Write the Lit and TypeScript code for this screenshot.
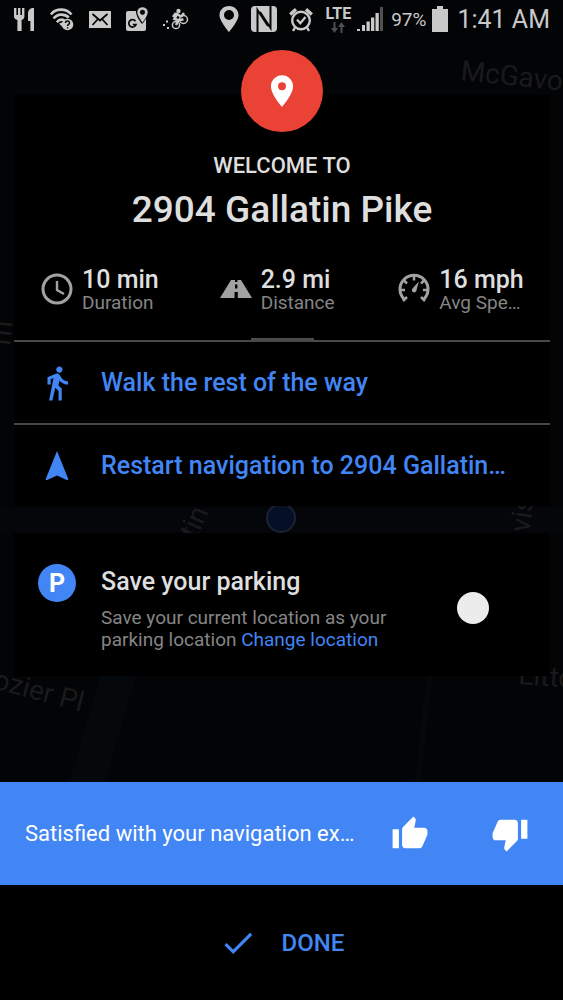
import { LitElement, html, css, svg } from "lit";
import { customElement, state } from "lit/decorators.js";

const iconPaths = {
  place:
    "M12 2C8.13 2 5 5.13 5 9c0 5.25 7 13 7 13s7-7.75 7-13c0-3.87-3.13-7-7-7zm0 9.5a2.5 2.5 0 1 1 0-5 2.5 2.5 0 0 1 0 5z",
  walk: "M13.5 5.5c1.1 0 2-.9 2-2s-.9-2-2-2-2 .9-2 2 .9 2 2 2zM9.8 8.9L7 23h2.1l1.8-8 2.1 2v6h2v-7.5l-2.1-2 .6-3C14.8 12 16.8 13 19 13v-2c-1.9 0-3.5-1-4.3-2.4l-1-1.6c-.4-.6-1-1-1.7-1-.3 0-.5.1-.8.1L6 8.3V13h2V9.6l1.8-.7",
  navigate: "M12 2.5L4.8 20.3l.7.7L12 18l6.5 3 .7-.7z",
  thumbUp:
    "M1 21h4V9H1v12zm22-11c0-1.1-.9-2-2-2h-6.31l.95-4.57.03-.32c0-.41-.17-.79-.44-1.06L14.17 1 7.59 7.59C7.22 7.95 7 8.45 7 9v10c0 1.1.9 2 2 2h9c.83 0 1.54-.5 1.84-1.22l3.02-7.05c.09-.23.14-.47.14-.73v-2z",
  thumbDown:
    "M15 3H6c-.83 0-1.54.5-1.84 1.22l-3.02 7.05c-.09.23-.14.47-.14.73v2c0 1.1.9 2 2 2h6.31l-.95 4.57-.03.32c0 .41.17.79.44 1.06L9.83 23l6.59-6.59c.36-.36.58-.86.58-1.41V5c0-1.1-.9-2-2-2zm4 0v12h4V3h-4z",
  check: "M9 16.17L4.83 12l-1.42 1.41L9 19 21 7l-1.41-1.41z",
};

const icon = (name: keyof typeof iconPaths) => html`
  <svg class="icon" viewBox="0 0 24 24" aria-hidden="true">
    <path fill="currentColor" fill-rule="evenodd" d=${iconPaths[name]}></path>
  </svg>
`;

@customElement("status-bar")
class StatusBar extends LitElement {
  static styles = css`
    :host {
      display: flex;
      justify-content: space-between;
      align-items: center;
      height: 38px;
      padding: 0 13px 0 14px;
      color: #c9c9c9;
      white-space: nowrap;
    }
    .group {
      display: flex;
      align-items: center;
    }
    .notifications {
      gap: 15px;
    }
    .system {
      gap: 6px;
    }
    .signals {
      display: flex;
      align-items: center;
      gap: 12px;
    }
    svg {
      display: block;
      flex: none;
    }
    .network {
      display: flex;
      flex-direction: column;
      align-items: center;
      font-size: 16px;
      line-height: 16px;
      font-weight: 700;
    }
    .percent {
      font-size: 19px;
    }
    .clock {
      font-size: 25px;
      padding-left: 3px;
    }
  `;

  render() {
    return html`
      <div class="group notifications">
        <svg width="21" height="24" viewBox="0 0 21 24" fill="currentColor">
          <path
            d="M0 1h2.400v7h1.600V1h2.400v7H8V1h2.400v8.500c0 2-1.200 3-2.800 3.500V24H3.400V13C1.500 12.500 0 11.500 0 9.500zM20 1v23h-3.600V14H14V6.500C14 3 16 1 20 1z"
          />
        </svg>
        <svg width="24" height="24" viewBox="0 0 24 24" fill="none" stroke="currentColor">
          <g stroke-width="2.600">
            <path d="M.8 7.500C6 1 16 1 21.500 7.500" />
            <path d="M3.600 11.500c4-5 11-5 15.200-1" />
            <path d="M6.800 15.200c2-2.500 5.200-3 7.600-1.800" />
          </g>
          <path d="M9 16.500l3-1v4z" fill="currentColor" stroke="none" />
          <circle cx="17.500" cy="17.500" r="5.800" fill="currentColor" stroke="none" />
          <path d="M15.500 16c0-3 4.200-2.600 4 0 0 1.400-1.900 1.400-1.900 3M17.600 20.200v1.400" stroke="#050607" stroke-width="1.500" />
        </svg>
        <svg width="22" height="18" viewBox="0 0 22 18">
          <path fill="currentColor" d="M0 1h22v17H0z" />
          <path d="M3.500 4l7.500 6.500L18.500 4M3.500 15l5-5.500M18.500 15l-5-5.500" fill="none" stroke="#050607" stroke-width="1.800" />
        </svg>
        <svg width="22" height="24" viewBox="0 0 22 24">
          <path fill="currentColor" d="M2 4h8c0 5 3 9 6 13 2-2 3-4 4-6v11a2 2 0 0 1-2 2H2a2 2 0 0 1-2-2V6a2 2 0 0 1 2-2z" />
          <path
            fill="currentColor"
            fill-rule="evenodd"
            stroke="#050607"
            stroke-width=".6"
            d="M16.500 0c3.200 0 5.500 2.300 5.500 5.300 0 3.700-5.500 10.700-5.500 10.700S11 9 11 5.300C11 2.300 13.300 0 16.500 0zm0 3a2.300 2.300 0 1 0 0 4.600 2.300 2.300 0 0 0 0-4.600z"
          />
          <path d="M9.500 14.200a3.700 3.700 0 1 0 .5 3.300H6.800" fill="none" stroke="#050607" stroke-width="1.700" />
        </svg>
        <svg width="26" height="22" viewBox="0 0 26 22" fill="none" stroke="currentColor">
          <circle cx="13" cy="17" r="3.600" stroke-width="1.500" />
          <circle cx="20.500" cy="11.500" r="4" stroke-width="1.500" />
          <path d="M13 17l2.500-5 5-.5M15 12l-3.500-1 2.500-5 4 2.500M18 9l3-4M13 5l-3 4" stroke-width="2.600" />
          <circle cx="15.500" cy="3" r="2.200" fill="currentColor" stroke="none" />
          <path d="M0 17h2M3 13.500h2M4 20h2" stroke-width="2" />
        </svg>
      </div>
      <div class="group system">
        <div class="signals">
          <svg width="20" height="26" viewBox="0 0 20 26">
            <path fill="currentColor" fill-rule="evenodd" d="M10 0c5.600 0 9.500 4 9.500 9.200C19.500 15 10 26 10 26S.5 15 .5 9.200C.5 4 4.400 0 10 0zm0 4a5 5 0 1 0 0 10 5 5 0 0 0 0-10z" />
          </svg>
          <svg width="26" height="26" viewBox="0 0 26 26">
            <rect width="26" height="26" rx="4" fill="currentColor" />
            <path d="M6.500 26V4L17 20M19.500 0v22L9 6" fill="none" stroke="#050607" stroke-width="2" />
          </svg>
          <svg width="24" height="25" viewBox="0 0 24 25" fill="none" stroke="currentColor">
            <circle cx="12" cy="13.500" r="8.800" stroke-width="2.400" />
            <path d="M8 12.500l3.300 3.800L16.500 10" stroke-width="2.300" />
            <path d="M1.200 7.500L7 2.200M22.800 7.500L17 2.200" stroke-width="3.400" />
            <path d="M6 20.500l-2 3.500M18 20.500l2 3.500" stroke-width="2.400" />
          </svg>
          <div class="network">
            LTE
            <svg width="14" height="11" viewBox="0 0 14 11" fill="#4c5050">
              <path d="M2.500 0h2v6H7l-3.500 5L0 6h2.500zM9.500 11h2V5H14l-3.500-5L7 5h2.500z" />
            </svg>
          </div>
        </div>
        <svg width="28" height="24" viewBox="0 0 28 24" fill="currentColor">
          <path d="M0 22h3v2H0zM5 18h3v6H5zM9.500 14.500h3.300V24H9.500zM14 10.500h3.300V24H14zM18.500 6h3.300v18h-3.300z" />
          <path fill="#505050" d="M23 0h3v24h-3z" />
        </svg>
        <span class="percent">97%</span>
        <svg width="16" height="26" viewBox="0 0 16 26">
          <path fill="currentColor" d="M5 0h6v3h5v23H0V3h5z" />
        </svg>
        <span class="clock">1:41 AM</span>
      </div>
    `;
  }
}

@customElement("map-backdrop")
class MapBackdrop extends LitElement {
  static styles = css`
    :host {
      display: block;
      overflow: hidden;
      background: #030406;
    }
    svg {
      display: block;
      width: 100%;
      height: 100%;
    }
    text {
      font-size: 28px;
      fill: #191a1b;
    }
  `;

  render() {
    return html`
      <svg viewBox="0 0 563 1000" preserveAspectRatio="xMidYMin slice" aria-hidden="true">
        ${svg`
          <path d="M120 670L82 800" stroke="#05080a" stroke-width="34" />
          <path d="M430 670L416 800" stroke="#05080a" stroke-width="6" />
          <path d="M0 520H563" stroke="#04060a" stroke-width="24" />
          <circle cx="281" cy="518" r="14" fill="#050f26" stroke="#1c2233" stroke-width="2" />
          <text transform="translate(460 80) rotate(6)">McGavock</text>
          <text transform="translate(-8 688) rotate(15)">ozier Pl</text>
          <text transform="translate(196 540) rotate(-66)">tin</text>
          <text transform="translate(529 533) rotate(-82)">vis</text>
          <text transform="translate(518 684) rotate(4)">Litton</text>
          <text transform="translate(10 346) rotate(-84)">m</text>
        `}
      </svg>
    `;
  }
}

@customElement("app-root")
class AppRoot extends LitElement {
  @state() private parkingSaved = false;

  static styles = css`
    :host {
      position: relative;
      display: flex;
      flex-direction: column;
      min-height: 100vh;
      background: #000;
      color: #dedede;
      font-family: Roboto, "Noto Sans", sans-serif;
    }
    * {
      box-sizing: border-box;
    }
    map-backdrop {
      position: absolute;
      inset: 0;
    }
    status-bar,
    main,
    .feedback,
    .footer {
      position: relative;
    }
    h1,
    p {
      margin: 0;
    }
    button {
      border: 0;
      padding: 0;
      background: none;
      color: inherit;
      font: inherit;
      cursor: pointer;
    }
    .icon {
      display: block;
      flex: none;
      width: 38px;
      height: 38px;
    }
    main {
      flex: 1;
      padding: 12px 13px 24px 14px;
    }
    .pin {
      position: relative;
      display: grid;
      place-items: center;
      width: 82px;
      height: 82px;
      margin: 0 auto -37px;
      border-radius: 50%;
      background: #ea4335;
      color: #fff;
    }
    .card {
      background: #000;
    }
    .arrival {
      padding-top: 57px;
    }
    .title {
      text-align: center;
      font-weight: 500;
    }
    .welcome {
      display: block;
      font-size: 22px;
      line-height: 28px;
    }
    .address {
      display: block;
      font-size: 37px;
      line-height: 60px;
    }
    .stats {
      display: grid;
      grid-template-columns: repeat(3, minmax(0, 1fr));
      padding: 24px 0;
    }
    .stat {
      display: flex;
      align-items: center;
      gap: 9px;
      padding: 0 24px 0 27px;
    }
    .stat svg {
      display: block;
      flex: none;
      color: #a2a2a2;
    }
    .figures {
      display: flex;
      flex-direction: column;
      min-width: 0;
      padding-top: 3px;
    }
    .value {
      font-size: 25px;
      line-height: 25px;
      font-weight: 500;
      white-space: nowrap;
    }
    .label {
      overflow: hidden;
      font-size: 19px;
      line-height: 22px;
      color: #858585;
      white-space: nowrap;
      text-overflow: ellipsis;
    }
    .handle {
      width: 63px;
      height: 2px;
      margin: 0 auto;
      background: #4c4c4c;
    }
    .action {
      display: flex;
      align-items: center;
      gap: 25px;
      width: 100%;
      height: 83px;
      padding: 0 40px 0 24px;
      border-top: 2px solid #484848;
      color: #4285f4;
      font-size: 25px;
      font-weight: 500;
      text-align: left;
    }
    .action-label {
      overflow: hidden;
      white-space: nowrap;
      text-overflow: ellipsis;
    }
    .parking {
      display: flex;
      gap: 25px;
      margin-top: 27px;
      padding: 31px 29px 25px 24px;
    }
    .badge {
      display: grid;
      flex: none;
      place-items: center;
      width: 38px;
      height: 38px;
      border-radius: 50%;
      background: #4285f4;
      color: #fff;
      font-size: 25px;
      font-weight: 700;
    }
    .parking-text {
      flex: 1;
    }
    .parking-title {
      display: block;
      font-size: 25px;
      line-height: 36px;
      font-weight: 500;
    }
    .parking-note {
      max-width: 310px;
      padding-top: 7px;
      font-size: 19px;
      line-height: 22px;
      color: #858585;
    }
    .link {
      color: #4285f4;
      text-decoration: none;
      white-space: nowrap;
    }
    .switch {
      appearance: none;
      align-self: center;
      display: flex;
      flex: none;
      width: 64px;
      height: 32px;
      margin: 0;
      border-radius: 16px;
      cursor: pointer;
    }
    .switch::before {
      content: "";
      width: 32px;
      height: 32px;
      border-radius: 50%;
      background: #ececec;
    }
    .switch:checked {
      justify-content: flex-end;
      background: #1d3a6b;
    }
    .feedback {
      display: flex;
      align-items: center;
      height: 103px;
      padding: 0 3px 0 25px;
      background: #4285f4;
      color: #fff;
    }
    .question {
      flex: 1;
      overflow: hidden;
      font-size: 22px;
      line-height: 30px;
      white-space: nowrap;
      text-overflow: ellipsis;
    }
    .vote {
      display: grid;
      flex: none;
      place-items: center;
      width: 100px;
      height: 100%;
    }
    .footer {
      background: #000;
    }
    .done {
      display: flex;
      align-items: center;
      justify-content: center;
      gap: 25px;
      width: 100%;
      height: 115px;
      color: #4285f4;
      font-size: 24px;
      font-weight: 500;
    }
  `;

  private clockIcon() {
    return html`<svg width="32" height="32" viewBox="0 0 32 32" fill="none" stroke="currentColor" aria-hidden="true">
      <circle cx="16" cy="16" r="14" stroke-width="3" />
      <path d="M16 8v9l7 4" stroke-width="2.400" />
    </svg>`;
  }

  private roadIcon() {
    return html`<svg width="32" height="32" viewBox="0 0 32 32" aria-hidden="true">
      <path
        fill="currentColor"
        fill-rule="evenodd"
        d="M11 7h10l11 18H0zm4 0v2h2.400V7zm0 4.500v4h2.400v-4zm-.5 7.500v6h3.300v-6z"
      />
    </svg>`;
  }

  private gaugeIcon() {
    return html`<svg width="32" height="32" viewBox="0 0 32 32" fill="none" stroke="currentColor" aria-hidden="true">
      <path d="M6.400 26.500a14 14 0 1 1 19.200 0" stroke-width="3" />
      <path
        d="M5 28l4-4M27 28l-4-4M2 17h5M30 17h-5M5.500 7l3.500 3.500M26.500 7L23 10.500M16 3v4.500"
        stroke-width="2.500"
      />
      <path d="M20.800 8.500l-2.300 8.700a2.300 2.300 0 1 1-4-1.600z" fill="currentColor" stroke="none" />
    </svg>`;
  }

  private stat(symbol: unknown, value: string, label: string) {
    return html`<div class="stat">
      ${symbol}
      <div class="figures">
        <span class="value">${value}</span>
        <span class="label">${label}</span>
      </div>
    </div>`;
  }

  private toggleParking(event: Event) {
    this.parkingSaved = (event.target as HTMLInputElement).checked;
  }

  render() {
    return html`
      <map-backdrop></map-backdrop>
      <status-bar></status-bar>
      <main>
        <div class="pin">${icon("place")}</div>
        <section class="card arrival">
          <h1 class="title">
            <span class="welcome">WELCOME TO</span>
            <span class="address">2904 Gallatin Pike</span>
          </h1>
          <div class="stats">
            ${this.stat(this.clockIcon(), "10 min", "Duration")}
            ${this.stat(this.roadIcon(), "2.9 mi", "Distance")}
            ${this.stat(this.gaugeIcon(), "16 mph", "Avg Speed")}
          </div>
          <div class="handle"></div>
          <button class="action" type="button">
            ${icon("walk")}<span class="action-label">Walk the rest of the way</span>
          </button>
          <button class="action" type="button">
            ${icon("navigate")}<span class="action-label">Restart navigation to 2904 Gallatin Pike</span>
          </button>
        </section>
        <section class="card parking">
          <div class="badge" aria-hidden="true">P</div>
          <div class="parking-text">
            <label class="parking-title" for="parking">Save your parking</label>
            <p class="parking-note">
              Save your current location as your parking location
              <a class="link" href="#location">Change location</a>
            </p>
          </div>
          <input
            class="switch"
            id="parking"
            type="checkbox"
            role="switch"
            .checked=${this.parkingSaved}
            @change=${this.toggleParking}
          />
        </section>
      </main>
      <section class="feedback">
        <p class="question">Satisfied with your navigation experience?</p>
        <button class="vote" type="button" aria-label="Yes">${icon("thumbUp")}</button>
        <button class="vote" type="button" aria-label="No">${icon("thumbDown")}</button>
      </section>
      <div class="footer">
        <button class="done" type="button">${icon("check")}<span>DONE</span></button>
      </div>
    `;
  }
}
